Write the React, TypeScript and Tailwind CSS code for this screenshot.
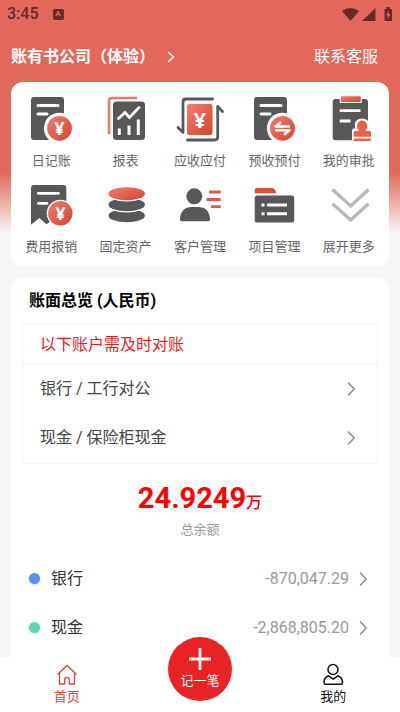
import React from "react";

type IconProps = { children: React.ReactNode };

const MenuSvg = ({ children }: IconProps) => (
  <svg className="h-12 w-12" viewBox="0 0 48 48" fill="none" aria-hidden="true">
    {children}
  </svg>
);

const Yuan = ({ x, y, size = 18 }: { x: number; y: number; size?: number }) => (
  <text
    x={x}
    y={y}
    fontSize={size}
    textAnchor="middle"
    className="fill-white font-['Open_Sans','Noto_Sans_CJK_SC',sans-serif] font-bold"
  >
    ¥
  </text>
);

const Doc = () => (
  <>
    <rect x="4" y="2" width="33" height="43" rx="3" fill="#585858" />
    <path d="M11 10.5H31M11 19H20" stroke="#fff" strokeWidth="3" strokeLinecap="round" />
    <circle cx="32.5" cy="33.3" r="15.6" fill="#fff" />
    <circle cx="32.5" cy="33.3" r="12.4" fill="url(#red)" />
  </>
);

const menus = [
  {
    name: "日记账",
    icon: (
      <MenuSvg>
        <Doc />
        <Yuan x={32.5} y={39.5} />
      </MenuSvg>
    ),
  },
  {
    name: "报表",
    icon: (
      <MenuSvg>
        <path d="M7 39V6Q7 3 10 3H35" stroke="#ea7566" strokeWidth="2.6" />
        <rect x="11" y="6.5" width="32" height="38.5" rx="3.5" fill="#585858" />
        <path d="M16.5 23.5L23 17.5L27.5 22.5L37 12.5" stroke="#fff" strokeWidth="2.8" strokeLinecap="round" />
        <path d="M17.3 33.5V40M27 30.5V40M36.3 24.5V40" stroke="#fff" strokeWidth="3" />
      </MenuSvg>
    ),
  },
  {
    name: "应收应付",
    icon: (
      <MenuSvg>
        <rect x="11" y="9" width="25.5" height="31" rx="2" fill="url(#red)" />
        <g stroke="#585858" strokeWidth="2.8" strokeLinecap="round" strokeLinejoin="round">
          <path d="M36.5 4H10Q7 4 7 7V37.5L2 32.5" />
          <path d="M11.5 45H38.5Q41.7 45 41.7 42V11.5L46.5 16.5" />
        </g>
        <Yuan x={23.8} y={32.5} size={22} />
      </MenuSvg>
    ),
  },
  {
    name: "预收预付",
    icon: (
      <MenuSvg>
        <Doc />
        <path d="M40 31.5H25.5L31 27M25 35.3H39.5L34 39.8" stroke="#fff" strokeWidth="2.6" strokeLinejoin="round" />
      </MenuSvg>
    ),
  },
  {
    name: "我的审批",
    icon: (
      <MenuSvg>
        <rect x="7.7" y="4" width="35.3" height="41.3" rx="3" fill="#585858" />
        <rect x="14.7" y="0" width="22" height="8" fill="#fff" />
        <rect x="15.7" y="1.3" width="20" height="5.7" rx="1" fill="url(#red)" />
        <path d="M14.7 15.7H35.5M14.7 26H25.5" stroke="#fff" strokeWidth="2.8" />
        <path d="M27 48V35Q27 33.5 29 33.5H30Q28 24 37 23.5Q46 24 45 33.5H48V48Z" fill="#fff" />
        <path
          d="M37 25.3A6 6 0 0 1 40.5 35.5V36H44.5Q46 36 46 37.5V41.7H28.7V37.5Q28.7 36 30 36H34V35.5A6 6 0 0 1 37 25.3Z"
          fill="#e8604f"
        />
        <rect x="28.7" y="43.5" width="17.3" height="2.5" fill="#e8604f" />
      </MenuSvg>
    ),
  },
  {
    name: "费用报销",
    icon: (
      <MenuSvg>
        <path d="M4 7Q4 4 7 4H36.3Q39.3 4 39.3 7V30L19.5 43.3L12.5 37L4 43.7Z" fill="#585858" />
        <path d="M11.3 12.3H31.5M11.3 22.3H20" stroke="#fff" strokeWidth="2.8" strokeLinecap="round" />
        <circle cx="33.3" cy="32.3" r="13.6" fill="#fff" />
        <circle cx="33.3" cy="32.3" r="12.2" fill="url(#red)" />
        <Yuan x={33.3} y={38.5} />
      </MenuSvg>
    ),
  },
  {
    name: "固定资产",
    icon: (
      <MenuSvg>
        <ellipse cx="24.7" cy="34.7" rx="18.2" ry="6.5" fill="#585858" />
        <ellipse cx="24.7" cy="24" rx="19.5" ry="7.4" fill="#fff" />
        <ellipse cx="24.7" cy="23.7" rx="18.2" ry="6.5" fill="#585858" />
        <ellipse cx="24.7" cy="13" rx="19.5" ry="7.6" fill="#fff" />
        <ellipse cx="24.7" cy="12.7" rx="18.2" ry="6.5" fill="url(#red)" />
      </MenuSvg>
    ),
  },
  {
    name: "客户管理",
    icon: (
      <MenuSvg>
        <circle cx="18.3" cy="15.3" r="8" fill="#585858" />
        <path d="M5.5 40.2Q4 40.2 4 38.5Q4.5 26 16 26H22Q33.5 26 34 38.5Q34 40.2 32.5 40.2Z" fill="#585858" />
        <path d="M33 11H44.7M30.5 18.5H44.7M35 25.7H44.7" stroke="#e2594b" strokeWidth="2.8" />
      </MenuSvg>
    ),
  },
  {
    name: "项目管理",
    icon: (
      <MenuSvg>
        <path d="M4.7 12.3V9Q4.7 7 6.7 7H22Q24 7 25 9L26.5 12.3Z" fill="#dc4c3f" />
        <rect x="4.7" y="14.5" width="39.5" height="27" rx="2.5" fill="#585858" />
        <path d="M11.5 24H14.5M11.5 32.7H14.5M17 24H37M17 32.7H37" stroke="#fff" strokeWidth="3" />
      </MenuSvg>
    ),
  },
  {
    name: "展开更多",
    icon: (
      <MenuSvg>
        <path d="M7.5 8.5L25.7 25L43.5 8.5M7.5 22.7L25.7 39L43.5 22.7" stroke="#b9b9b9" strokeWidth="3.4" />
      </MenuSvg>
    ),
  },
];

const accounts = ["银行 / 工行对公", "现金 / 保险柜现金"];

const Arrow = () => (
  <svg className="h-4 w-2 shrink-0" viewBox="0 0 8 16" fill="none" aria-hidden="true">
    <path d="M1 1.5L7.2 8L1 14.5" stroke="#8a8a8a" strokeWidth="1.4" />
  </svg>
);

const StatusBar = () => (
  <div className="flex h-7 items-center pr-2 pl-[7px] text-[#6b2a24]">
    <span className="text-base font-medium">3:45</span>
    <span className="ml-[14px] flex h-[11px] w-[11px] items-center justify-center rounded-xs bg-[#6b2a24] text-[8px] font-bold text-[#e26859]">
      A
    </span>
    <svg className="ml-auto h-4 w-[50px]" viewBox="0 0 50 16" fill="#6b2a24" aria-hidden="true">
      <path d="M0 5Q8.500 -1 17 5L8.500 15Z" />
      <path d="M33.500 2V15H20Z" />
      <path d="M43 3H44.500V1H48V3H50V15H42.500V3Z" />
      <path d="M47 4.500L44 9.500H46L45.500 13L48.500 8H46.500Z" fill="#e26859" />
    </svg>
  </div>
);

const App = () => {
  return (
    <div className="flex h-screen flex-col bg-[#f7f7f7] font-['Roboto','Noto_Sans_CJK_SC',sans-serif]">
      <svg className="absolute h-0 w-0" aria-hidden="true">
        <defs>
          <linearGradient id="red" x1="0" y1="0" x2="1" y2="1">
            <stop offset="0" stopColor="#f07f70" />
            <stop offset="1" stopColor="#d8402f" />
          </linearGradient>
        </defs>
      </svg>
      <main className="min-h-0 flex-1 overflow-hidden bg-[linear-gradient(#e26859_172px,#f7f7f7_234px)]">
        <StatusBar />
        <header className="flex h-[54px] items-center justify-between px-[22px] pt-[3px] pl-[11px] text-white">
          <button className="flex items-center text-base font-bold">
            账有书公司（体验）
            <svg className="ml-3 h-3 w-2" viewBox="0 0 8 12" fill="none" aria-hidden="true">
              <path d="M1 1L6.5 6L1 11" stroke="#fff" strokeWidth="1.3" />
            </svg>
          </button>
          <a href="#service" className="text-base">
            联系客服
          </a>
        </header>

        <nav className="mx-[11px] grid grid-cols-5 gap-y-[11px] rounded-xl bg-white px-[3px] pt-[13px] pb-[10px]">
          {menus.map((item) => (
            <button key={item.name} className="flex flex-col items-center gap-2">
              {item.icon}
              <span className="text-[13px] leading-[19px] text-[#666666]">{item.name}</span>
            </button>
          ))}
        </nav>

        <section className="mx-[11px] mt-[11px] rounded-t-xl bg-white px-[11px] pb-6">
          <h1 className="h-[47px] px-[7px] pt-3 text-base leading-6 font-bold text-black">账面总览 (人民币)</h1>
          <div className="border border-[#f4f4f4]">
            <p className="h-10 border-b border-[#f4f4f4] px-[17px] text-base leading-10 text-[#f01818]">
              以下账户需及时对账
            </p>
            {accounts.map((name) => (
              <button
                key={name}
                className="flex h-[49px] w-full items-center justify-between pr-[22px] pb-[2px] pl-[17px] text-base text-[#444444]"
              >
                {name}
                <Arrow />
              </button>
            ))}
          </div>

          <div className="pt-[14px] pb-4 text-center">
            <p className="text-[29px] leading-10 font-bold text-[#ff0000]">
              24.9249<span className="text-base font-medium">万</span>
            </p>
            <p className="text-[13px] leading-6 text-[#999999]">总余额</p>
          </div>

          <div className="-mt-1">
            <button className="flex h-[49px] w-full items-center pr-[11px] pl-[7px] text-base text-[#333333]">
              <span className="mr-[11px] h-[11px] w-[11px] rounded-full bg-[#5b8ff9] shadow-sm" />
              银行
              <span className="mr-[10px] ml-auto text-[#999999]">-870,047.29</span>
              <Arrow />
            </button>
            <button className="flex h-[49px] w-full items-center pr-[11px] pl-[7px] text-base text-[#333333]">
              <span className="mr-[11px] h-[11px] w-[11px] rounded-full bg-[#5ad8a6] shadow-sm" />
              现金
              <span className="mr-[10px] ml-auto text-[#999999]">-2,868,805.20</span>
              <Arrow />
            </button>
          </div>
        </section>
      </main>

      <footer className="relative grid h-[55px] shrink-0 grid-cols-3 bg-white">
        <a href="#home" className="flex flex-col items-center pt-[6px] text-[#d9453c]">
          <svg className="h-6 w-6" viewBox="0 0 24 24" fill="none" stroke="currentColor" strokeWidth="1.3" aria-hidden="true">
            <path d="M2.5 11.5L12 2.500L21.5 11.5M4.5 9.800V21H9.700V16.500Q9.700 14.300 12 14.300Q14.300 14.300 14.300 16.500V21H19.5V9.800" />
          </svg>
          <span className="text-[13px] leading-5">首页</span>
        </a>
        <div />
        <a href="#mine" className="flex flex-col items-center pt-[6px] text-[#111111]">
          <svg className="h-6 w-6" viewBox="0 0 24 24" fill="none" stroke="currentColor" strokeWidth="1.5" aria-hidden="true">
            <circle cx="12" cy="6.5" r="5" />
            <path d="M7.5 12.8Q3 14.5 3 19.5Q3 21.3 4.5 21.3H20Q21.5 21.3 21.5 19.5Q21.5 14.500 17 12.8L12.3 16Z" />
          </svg>
          <span className="text-[13px] leading-5">我的</span>
        </a>
        <button className="absolute -top-5 left-1/2 flex h-16 w-16 -translate-x-1/2 flex-col items-center rounded-full bg-[#e92323] pt-[10px] text-white ring-4 ring-white">
          <svg className="h-6 w-6" viewBox="0 0 24 24" stroke="currentColor" strokeWidth="2.8" aria-hidden="true">
            <path d="M1 12H23M12 1V23" />
          </svg>
          <span className="text-[13px] leading-5">记一笔</span>
        </button>
      </footer>
    </div>
  );
};

export default App;
